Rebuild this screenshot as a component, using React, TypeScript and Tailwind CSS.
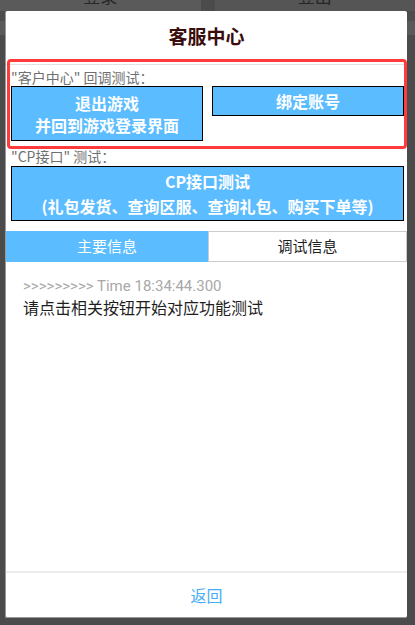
import React from "react";

const cjk = { fontFamily: '"Noto Sans CJK SC", "Noto Sans", sans-serif' };
const roboto = { fontFamily: 'Roboto, "Noto Sans CJK SC", sans-serif' };

function BackgroundPage() {
  return (
    <div className="flex flex-col w-full h-full bg-[#4b4b4b]">
      <div className="flex h-[30px] -mt-[19px] gap-[14px]">
        <div className="flex-1 bg-[#5a5a5a] flex items-center justify-center text-[#262626] text-[17px]">
          登录
        </div>
        <div className="flex-1 bg-[#555555] flex items-center justify-center text-[#262626] text-[17px]">
          登出
        </div>
      </div>
      <div className="h-[10px] bg-[#4d4d4d]" />
      <div className="h-[14px] bg-[#5a5a5a]" />
      <div className="flex-1" />
    </div>
  );
}

function Dialog() {
  return (
    <div
      className="absolute left-[5px] top-[11px] w-[402px] h-[607px] bg-white border-b border-l border-[#9a9a9a] rounded-[2px] flex flex-col"
      style={cjk}
    >
      <div className="h-[54px] flex items-center justify-center border-b border-[#e2e2e2]">
        <span className="text-[19px] font-bold text-[#3a0c0c] mt-[-3px]">客服中心</span>
      </div>

      <div className="pl-[5px] pr-[3px]">
        <div className="h-[21px] flex items-center text-[14px] text-[#707070] leading-none pt-[2px]">
          "客户中心" 回调测试：
        </div>
        <div className="flex gap-[9px] items-start">
          <button className="w-[192px] h-[55px] bg-[#5bbcff] border border-black text-white font-bold text-[16px] leading-[22px] flex flex-col items-center justify-center">
            <span>退出游戏</span>
            <span>并回到游戏登录界面</span>
          </button>
          <button className="flex-1 h-[30px] bg-[#5bbcff] border border-black text-white font-bold text-[16px] leading-none flex items-center justify-center">
            绑定账号
          </button>
        </div>

        <div className="h-[25px] flex items-end pb-[1px] text-[14px] text-[#707070] leading-[18px]">
          "CP接口" 测试：
        </div>
        <button className="w-[393px] h-[55px] bg-[#5bbcff] border border-black text-white font-bold text-[16px] leading-[25px] flex flex-col items-center justify-center">
          <span>CP接口测试</span>
          <span>(礼包发货、查询区服、查询礼包、购买下单等)</span>
        </button>
      </div>

      <div className="mt-[10px] flex h-[31px] text-[15px]">
        <div className="w-[202px] bg-[#5bbcff] text-white flex items-center justify-center">
          主要信息
        </div>
        <div className="flex-1 border border-[#cccccc] text-[#1f1f1f] flex items-center justify-center">
          调试信息
        </div>
      </div>

      <div className="px-[17px] pt-[14px] flex flex-col">
        <div className="text-[15px] text-[#a8a8a8] leading-[20px]" style={roboto}>
          &gt;&gt;&gt;&gt;&gt;&gt;&gt;&gt;&gt; Time 18:34:44.300
        </div>
        <div className="text-[16px] text-[#1e1e1e] leading-[22px]">
          请点击相关按钮开始对应功能测试
        </div>
      </div>

      <div className="flex-1" />

      <div className="h-[2px] bg-[#ececec]" />
      <div className="h-[44px] flex items-center justify-center text-[16px] text-[#45aef5]">
        返回
      </div>
    </div>
  );
}

export default function App() {
  return (
    <div className="relative w-[415px] h-[625px] overflow-hidden" style={cjk}>
      <BackgroundPage />
      <Dialog />
      <div className="absolute left-[7px] top-[59px] w-[400px] h-[90px] border-[3px] border-[#ff3b3b] rounded-[4px] pointer-events-none" />
    </div>
  );
}
